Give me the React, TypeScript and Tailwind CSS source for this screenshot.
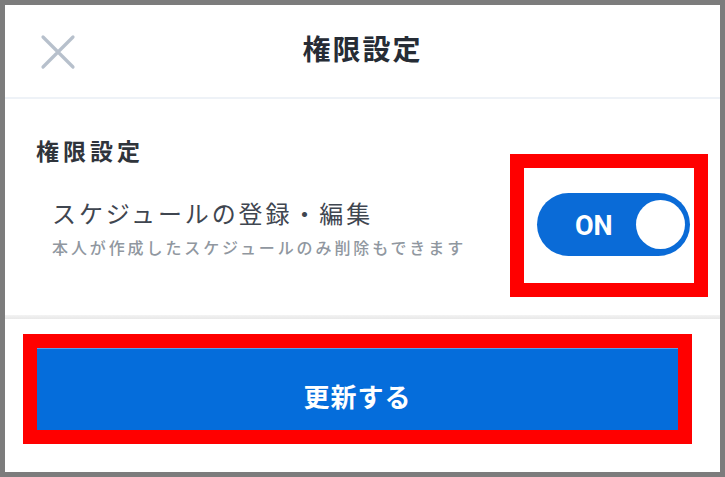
import { useState } from "react";

const jp = "font-['Noto_Sans_CJK_JP','Noto_Sans',sans-serif]";

export default function App() {
  const [on, setOn] = useState(true);

  return (
    <div className={`${jp} box-border flex h-[477px] w-[725px] flex-col border-[5px] border-[#7c7c7c] bg-white`}>
      {/* header */}
      <div className="grid h-[94px] shrink-0 grid-cols-[1fr_auto_1fr] items-center border-b-2 border-[#eef2f7]">
        <div className="pl-[35px] pt-[1px]">
          <svg width="36" height="36" viewBox="0 0 36 36" fill="none">
            <path d="M3 3L33 33M33 3L3 33" stroke="#b7c0cc" strokeWidth="3.2" strokeLinecap="round" />
          </svg>
        </div>
        <h1 className="pb-[6px] text-[28px] font-bold tracking-[2px] text-[#262c35]">権限設定</h1>
        <div />
      </div>

      {/* section */}
      <div className="flex h-[216px] shrink-0 items-start justify-between">
        <div className="pl-[31px] pt-[36px]">
          <h2 className="text-[23px] font-bold leading-[30px] tracking-[4px] text-[#2f343b]">権限設定</h2>
          <div className="pl-[16px] pt-[33px]">
            <div className="text-[24px] leading-[30px] tracking-[2.9px] text-[#3f4650]">
              スケジュールの登録・編集
            </div>
            <div className="pt-[9px] text-[16px] font-medium leading-[20px] tracking-[2.9px] text-[#9097a0]">
              本人が作成したスケジュールのみ削除もできます
            </div>
          </div>
        </div>

        <div className="mr-[12px] mt-[55px] flex h-[143px] w-[198px] items-center justify-end border-[14px] border-[#ff0000] pr-[4px]">
          <button
            onClick={() => setOn((v) => !v)}
            className="mt-[-2px] flex h-[63px] w-[153px] items-center justify-between rounded-full bg-[#0a6bd7] pl-[38px] pr-[5px]"
          >
            <span className="pt-[4px] font-['Roboto','Noto_Sans',sans-serif] text-[27px] font-bold leading-none text-white">
              {on ? "ON" : "OFF"}
            </span>
            <span className="h-[49px] w-[49px] rounded-full bg-white" />
          </button>
        </div>
      </div>

      {/* divider */}
      <div className="h-[4px] shrink-0 bg-gradient-to-b from-[#f3f3f3] to-[#e8e8e8]" />

      {/* footer */}
      <div className="flex flex-1 items-start pl-[18px] pt-[15px]">
        <div className="box-border h-[110px] w-[669px] border-[14px] border-[#ff0000]">
          <button className="flex h-full w-full items-center justify-center border-t border-[#5a9ce8] bg-[#056ddb] pt-[12px] text-[26px] font-bold tracking-[1px] text-white">
            更新する
          </button>
        </div>
      </div>
    </div>
  );
}
